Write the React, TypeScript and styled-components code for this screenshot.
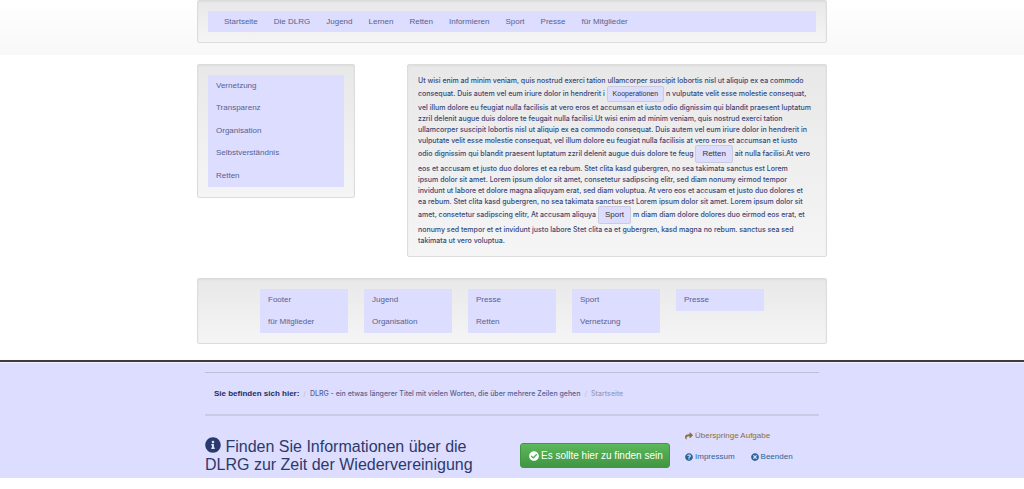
import React from "react";
import styled, { createGlobalStyle } from "styled-components";
import { FaInfoCircle, FaCheckCircle, FaShare, FaQuestionCircle, FaTimesCircle } from "react-icons/fa";

const GlobalStyle = createGlobalStyle`
  *, *::before, *::after { box-sizing: border-box; }
  body {
    margin: 0;
    background: #fff;
    color: #384777;
    font: 8px/11px "Liberation Sans", Arial, sans-serif;
  }
  ul, ol { list-style: none; margin: 0; padding: 0; }
  a { color: inherit; text-decoration: none; }
`;

const Container = styled.div`
  max-width: 630px;
  margin: 0 auto;
`;

const TopBar = styled.header`
  min-height: 55px;
  background: linear-gradient(#fff, #f8f8f8);
`;

const Panel = styled.div`
  padding: 10px;
  border: 1px solid #dcdcdc;
  border-radius: 2px;
  background: linear-gradient(#e8e8e8, #f5f5f5);
  box-shadow: inset 0 1px 2px rgba(0, 0, 0, 0.05);
`;

const MainNav = styled.ul`
  display: flex;
  flex-wrap: wrap;
  padding: 0 8px;
  background: #ddf;
`;

const LinkList = styled.ul<{ $rows: number }>`
  display: grid;
  min-height: ${(p) => (p.$rows > 2 ? 112 : p.$rows * 22)}px;
  background: #ddf;
`;

const NavLink = styled.a`
  display: block;
  padding: 5px 8px;
  color: #56628f;
`;

const Columns = styled.main`
  display: grid;
  grid-template-columns: 158px minmax(0, 420px);
  justify-content: space-between;
  align-items: start;
  padding: 9px 0 21px;
`;

const Paragraph = styled.p`
  margin: 0;
  font-family: Inter, Arial, sans-serif;
  font-size: 7px;
  font-weight: 500;
`;

const Line = styled.span`
  display: block;
`;

const Tag = styled.button<{ $small?: boolean }>`
  margin: ${(p) => (p.$small ? "0" : "-1px 0 0")};
  padding: ${(p) => (p.$small ? "2px 5px" : "3px 6px")};
  border: 1px solid #ccccdf;
  border-radius: 2px;
  background: #ddf;
  color: #333;
  font: ${(p) => (p.$small ? "7px" : "8px")}/10px "Liberation Sans", Arial, sans-serif;
  vertical-align: middle;
`;

const FooterPanel = styled(Panel)`
  display: flex;
  justify-content: center;
  align-items: flex-start;
  gap: 16px;
  margin-bottom: 16px;
`;

const FooterColumn = styled.div`
  flex: 0 1 88px;
`;

const TaskBar = styled.footer`
  border-top: 2px solid #3c3c40;
  background: #ddf;
  box-shadow: inset 0 1px 0 #f0f0ff, 0 1px 3px rgba(0, 0, 0, 0.08);
`;

const TaskInner = styled(Container)`
  padding: 10px 8px 4px;
`;

const Breadcrumb = styled.ol`
  display: flex;
  padding: 15px 9px;
  border-top: 1px solid #bebed6;
  border-bottom: 2px solid #cacae0;
`;

const Crumb = styled.li<{ $active?: boolean }>`
  color: ${(p) => (p.$active ? "#959bc2" : "#56628f")};
  font-family: Inter, Arial, sans-serif;
  font-size: 7px;
  font-weight: 500;

  &::before {
    content: "/";
    padding: 0 4px;
    color: #c3c3dd;
  }
`;

const CrumbTitle = styled.li`
  color: #1f2d60;
  font-weight: bold;
`;

const TaskRow = styled.div`
  display: grid;
  grid-template-columns: 315px 165px 1fr;
  align-items: start;
  padding-top: 14px;
`;

const TaskTitle = styled.h1`
  max-width: 280px;
  margin: 7px 0 0;
  color: #2b3a6c;
  font-size: 16px;
  line-height: 18px;
  font-weight: normal;

  svg { vertical-align: -1px; }
`;

const FoundButton = styled.button`
  justify-self: start;
  display: flex;
  align-items: center;
  gap: 2px;
  margin-top: 13px;
  padding: 5px 6px 5px 8px;
  border: 1px solid #419641;
  border-radius: 3px;
  background: linear-gradient(#5cb85c, #419641);
  color: #fff;
  font: 10px/13px "Liberation Sans", Arial, sans-serif;
  white-space: nowrap;
`;

const Actions = styled.div`
  display: flex;
  flex-wrap: wrap;
  gap: 10px 16px;
`;

const Action = styled.a<{ $skip?: boolean }>`
  display: flex;
  align-items: center;
  gap: 2px;
  flex-basis: ${(p) => (p.$skip ? "100%" : "auto")};
  color: ${(p) => (p.$skip ? "#8a6d3b" : "#2a6496")};
`;

const mainItems = ["Startseite", "Die DLRG", "Jugend", "Lernen", "Retten", "Informieren", "Sport", "Presse", "für Mitglieder"];
const sideItems = ["Vernetzung", "Transparenz", "Organisation", "Selbstverständnis", "Retten"];
const footerItems = [
  ["Footer", "für Mitglieder"],
  ["Jugend", "Organisation"],
  ["Presse", "Retten"],
  ["Sport", "Vernetzung"],
  ["Presse"],
];

const Items = ({ items }: { items: string[] }) => (
  <>
    {items.map((item) => (
      <li key={item}>
        <NavLink href="#">{item}</NavLink>
      </li>
    ))}
  </>
);

export default function App() {
  return (
    <>
      <GlobalStyle />
      <TopBar>
        <Container>
          <Panel as="nav">
            <MainNav>
              <Items items={mainItems} />
            </MainNav>
          </Panel>
        </Container>
      </TopBar>
      <Container>
        <Columns>
          <Panel as="nav">
            <LinkList $rows={sideItems.length}>
              <Items items={sideItems} />
            </LinkList>
          </Panel>
          <Panel as="article">
            <Paragraph>
              <Line>Ut wisi enim ad minim veniam, quis nostrud exerci tation ullamcorper suscipit lobortis nisl ut aliquip ex ea commodo</Line>
              <Line>
                consequat. Duis autem vel eum iriure dolor in hendrerit i <Tag $small>Kooperationen</Tag> n vulputate velit esse
                molestie consequat,
              </Line>
              <Line>vel illum dolore eu feugiat nulla facilisis at vero eros et accumsan et iusto odio dignissim qui blandit praesent luptatum</Line>
              <Line>zzril delenit augue duis dolore te feugait nulla facilisi.Ut wisi enim ad minim veniam, quis nostrud exerci tation</Line>
              <Line>ullamcorper suscipit lobortis nisl ut aliquip ex ea commodo consequat. Duis autem vel eum iriure dolor in hendrerit in</Line>
              <Line>vulputate velit esse molestie consequat, vel illum dolore eu feugiat nulla facilisis at vero eros et accumsan et iusto</Line>
              <Line>
                odio dignissim qui blandit praesent luptatum zzril delenit augue duis dolore te feug <Tag>Retten</Tag> ait nulla
                facilisi.At vero
              </Line>
              <Line>eos et accusam et justo duo dolores et ea rebum. Stet clita kasd gubergren, no sea takimata sanctus est Lorem</Line>
              <Line>ipsum dolor sit amet. Lorem ipsum dolor sit amet, consetetur sadipscing elitr, sed diam nonumy eirmod tempor</Line>
              <Line>invidunt ut labore et dolore magna aliquyam erat, sed diam voluptua. At vero eos et accusam et justo duo dolores et</Line>
              <Line>ea rebum. Stet clita kasd gubergren, no sea takimata sanctus est Lorem ipsum dolor sit amet. Lorem ipsum dolor sit</Line>
              <Line>
                amet, consetetur sadipscing elitr, At accusam aliquya <Tag>Sport</Tag> m diam diam dolore dolores duo eirmod eos
                erat, et
              </Line>
              <Line>nonumy sed tempor et et invidunt justo labore Stet clita ea et gubergren, kasd magna no rebum. sanctus sea sed</Line>
              <Line>takimata ut vero voluptua.</Line>
            </Paragraph>
          </Panel>
        </Columns>
        <FooterPanel as="nav">
          {footerItems.map((items) => (
            <FooterColumn key={items.join()}>
              <LinkList $rows={items.length}>
                <Items items={items} />
              </LinkList>
            </FooterColumn>
          ))}
        </FooterPanel>
      </Container>
      <TaskBar>
        <TaskInner>
          <Breadcrumb>
            <CrumbTitle>Sie befinden sich hier:</CrumbTitle>
            <Crumb>
              <a href="#">DLRG - ein etwas längerer Titel mit vielen Worten, die über mehrere Zeilen gehen</a>
            </Crumb>
            <Crumb $active>Startseite</Crumb>
          </Breadcrumb>
          <TaskRow>
            <TaskTitle>
              <FaInfoCircle size={16} /> Finden Sie Informationen über die DLRG zur Zeit der Wiedervereinigung
            </TaskTitle>
            <FoundButton>
              <FaCheckCircle size={10} />
              Es sollte hier zu finden sein
            </FoundButton>
            <Actions>
              <Action href="#" $skip>
                <FaShare size={8} />
                Überspringe Aufgabe
              </Action>
              <Action href="#">
                <FaQuestionCircle size={8} />
                Impressum
              </Action>
              <Action href="#">
                <FaTimesCircle size={8} />
                Beenden
              </Action>
            </Actions>
          </TaskRow>
        </TaskInner>
      </TaskBar>
    </>
  );
}
